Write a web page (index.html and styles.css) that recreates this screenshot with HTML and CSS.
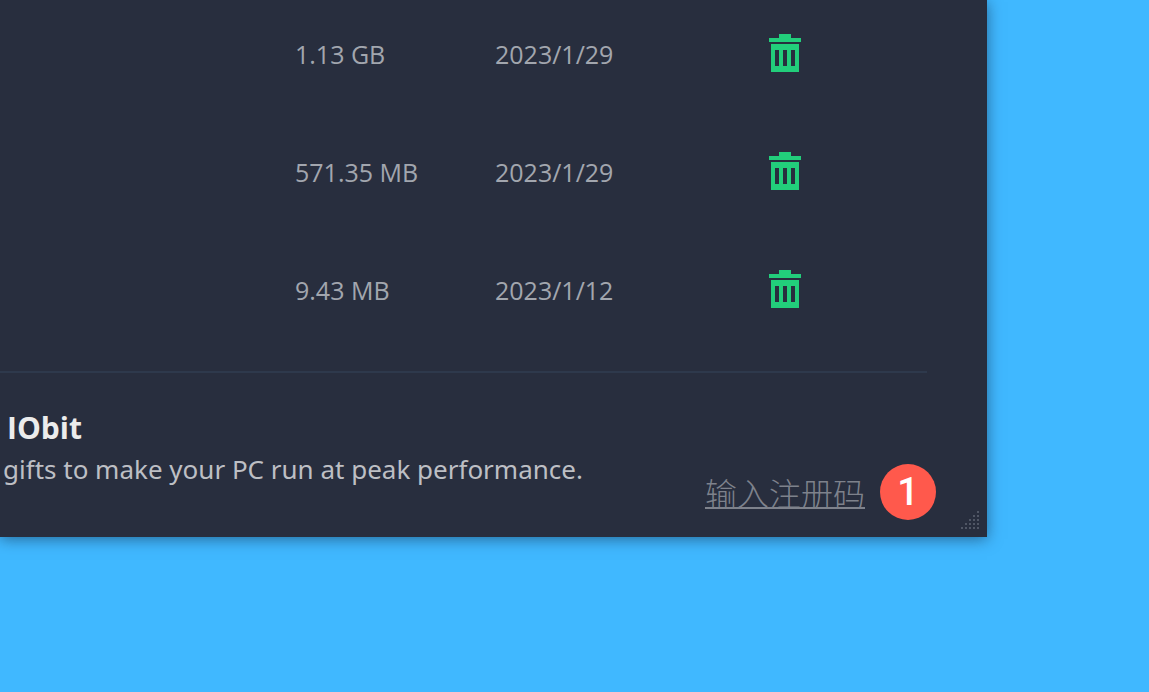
FILE: index.html
```html
<!DOCTYPE html>
<html lang="zh-CN">
<head>
<meta charset="utf-8">
<title>IObit</title>
<link rel="stylesheet" href="styles.css">
</head>
<body>
<svg class="sprite" aria-hidden="true">
  <symbol id="trash" viewBox="0 0 32 38">
    <path fill-rule="evenodd" d="M10 0h12v4h10v4H0V4h10zM2 10h28v28H2zM6 16v16h4V16zM14 16v16h4V16zM22 16v16h4V16z"/>
  </symbol>
</svg>
<main class="window">
  <table class="files">
    <tbody>
      <tr><td class="size">1.13 GB</td><td class="date">2023/1/29</td><td><button class="delete" type="button" aria-label="Delete"><svg class="icon"><use href="#trash"/></svg></button></td></tr>
      <tr><td class="size">571.35 MB</td><td class="date">2023/1/29</td><td><button class="delete" type="button" aria-label="Delete"><svg class="icon"><use href="#trash"/></svg></button></td></tr>
      <tr><td class="size">9.43 MB</td><td class="date">2023/1/12</td><td><button class="delete" type="button" aria-label="Delete"><svg class="icon"><use href="#trash"/></svg></button></td></tr>
    </tbody>
  </table>
  <hr class="divider">
  <footer class="footer">
    <div class="promo">
      <h2 class="title">IObit</h2>
      <p class="text">gifts to make your PC run at peak performance.</p>
    </div>
    <div class="register">
      <a class="link" href="#">输入注册码</a>
      <span class="badge">1</span>
    </div>
  </footer>
  <svg class="grip" viewBox="0 0 18 18" aria-hidden="true">
    <path d="M16 0h2v2h-2zM12 4h2v2h-2zM16 4h2v2h-2zM8 8h2v2H8zM12 8h2v2h-2zM16 8h2v2h-2zM4 12h2v2H4zM8 12h2v2H8zM12 12h2v2h-2zM16 12h2v2h-2zM0 16h2v2H0zM4 16h2v2H4zM8 16h2v2H8zM12 16h2v2h-2zM16 16h2v2h-2z"/>
  </svg>
</main>
</body>
</html>
```
FILE: styles.css
```css
* {
  box-sizing: border-box;
}

body {
  min-height: 100vh;
  margin: 0;
  padding-right: 162px;
  background: #40b8ff;
  font-family: "Open Sans", "Noto Sans", "Noto Sans CJK SC", sans-serif;
}

.sprite {
  display: none;
}

.window {
  position: relative;
  padding-top: 17px;
  background: #282e3e;
  box-shadow: 0 2px 14px rgba(20, 50, 80, 0.6);
}

.files {
  width: 100%;
  border-collapse: collapse;
  table-layout: fixed;
  color: #a2a6ae;
  font-size: 25px;
  line-height: 40px;
}

.files td {
  height: 118px;
  padding: 17px 0 0;
  vertical-align: top;
}

.files .size {
  width: 495px;
  padding-left: 295px;
}

.files .date {
  width: 274px;
}

.delete {
  display: block;
  padding: 0;
  border: 0;
  background: none;
  color: #22ce7b;
  cursor: pointer;
}

.icon {
  display: block;
  width: 32px;
  height: 38px;
  fill: currentColor;
}

.divider {
  height: 2px;
  margin: 0 60px 0 0;
  border: 0;
  background: #2e394c;
}

.footer {
  display: flex;
  justify-content: space-between;
  align-items: flex-end;
  padding: 36px 51px 17px 3px;
}

.promo {
  align-self: flex-start;
}

.title {
  margin: 0;
  padding-left: 4px;
  color: #ececec;
  font-size: 30px;
  line-height: 38px;
}

.text {
  margin: 0;
  color: #bdbfc4;
  font-family: "Noto Sans", "Open Sans", sans-serif;
  font-size: 26px;
  line-height: 44px;
}

.register {
  display: flex;
  align-items: center;
  gap: 15px;
  padding-top: 55px;
}

.link {
  color: #7e828c;
  font-family: "Noto Sans CJK SC", sans-serif;
  font-size: 32px;
  font-weight: 300;
  line-height: 48px;
  text-decoration-thickness: 2px;
  text-underline-offset: 1px;
  text-decoration-skip-ink: none;
}

.badge {
  width: 56px;
  border-radius: 50%;
  background: #ff594c;
  color: #fff;
  font-family: Roboto, "Liberation Sans", sans-serif;
  font-size: 38px;
  font-weight: 500;
  line-height: 56px;
  text-align: center;
}

.grip {
  position: absolute;
  right: 8px;
  bottom: 8px;
  width: 18px;
  height: 18px;
  fill: #505665;
}
```
